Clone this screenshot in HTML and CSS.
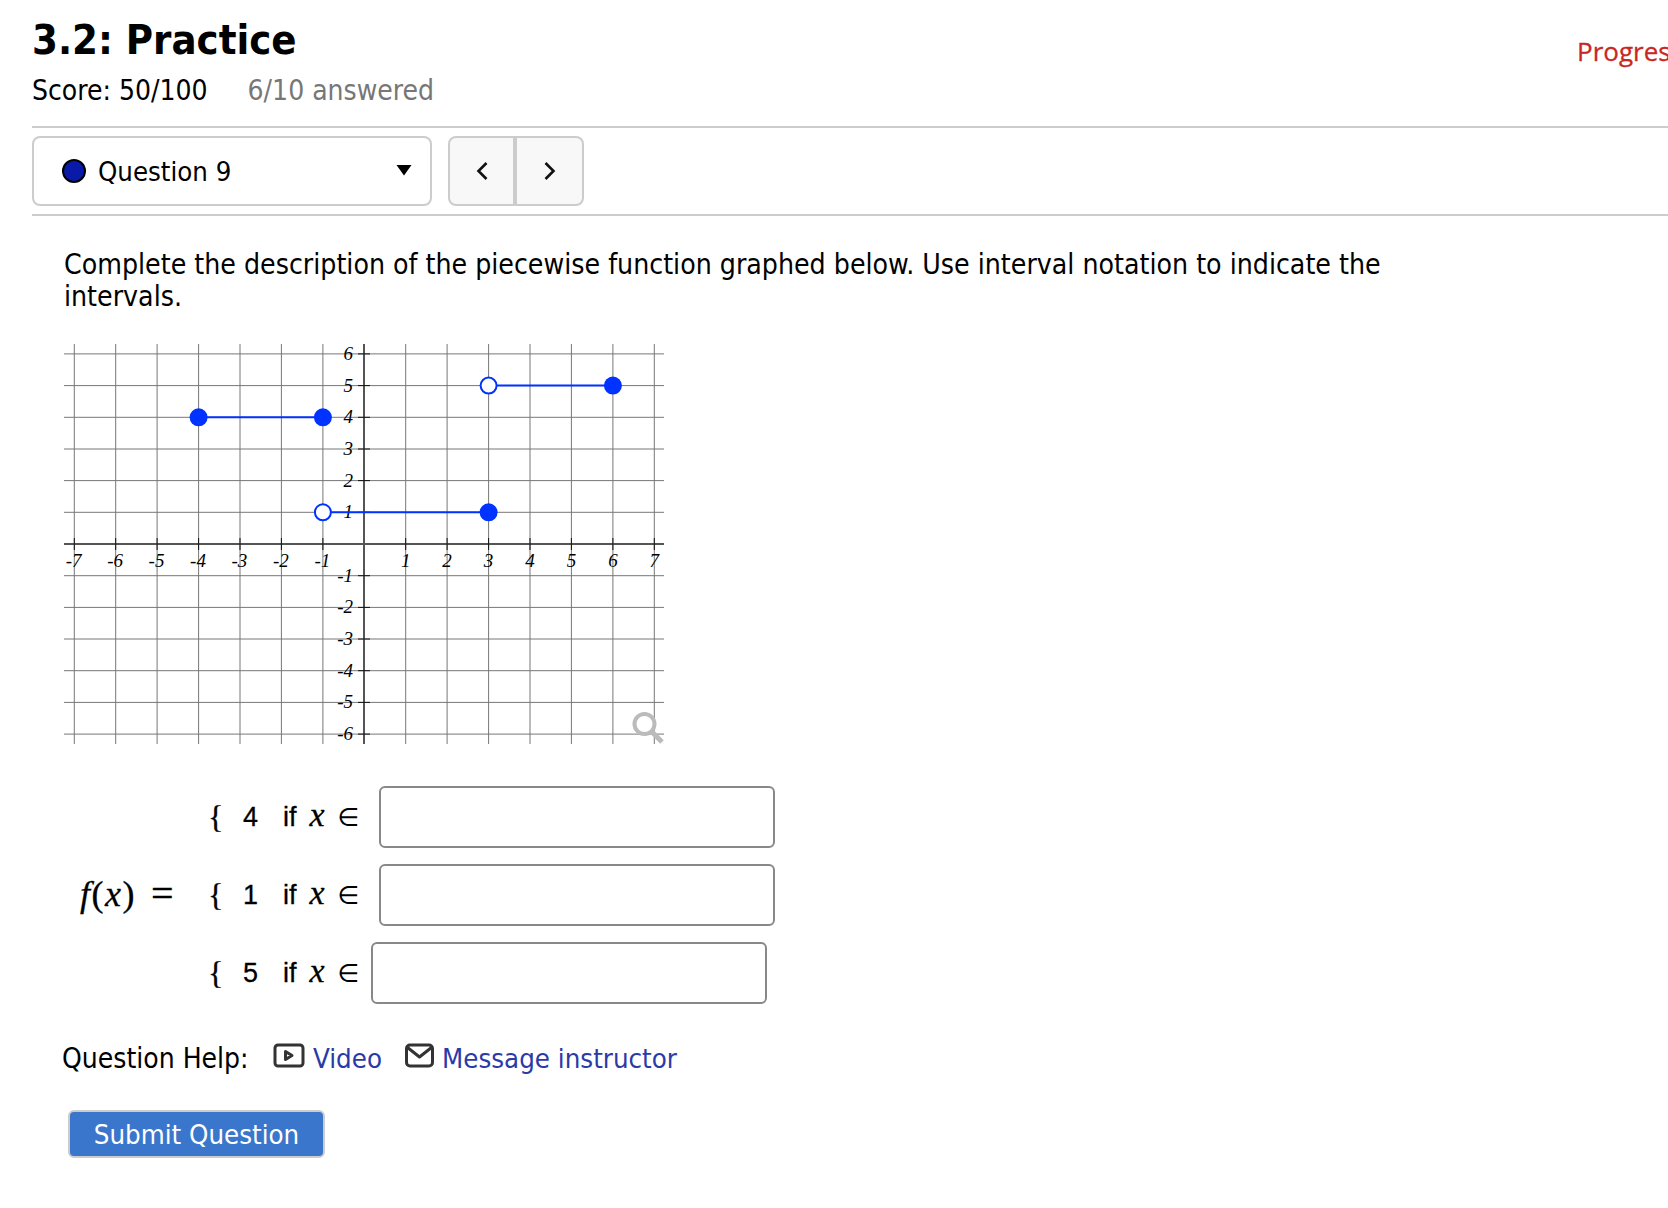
FILE: index.html
```html
<!DOCTYPE html>
<html lang="en">
<head>
<meta charset="utf-8">
<title>3.2: Practice</title>
<link rel="stylesheet" href="styles.css">
</head>
<body>
<header class="head">
  <div class="head-main">
    <h1 class="title">3.2: Practice</h1>
    <div class="score"><span>Score: 50/100</span><span class="answered">6/10 answered</span></div>
  </div>
  <a class="progress">Progress</a>
</header>
<nav class="nav">
  <div class="select">
    <span class="dot"></span><span class="select-label">Question 9</span><svg class="caret" width="16" height="12" viewBox="0 0 16 12"><path d="M.5 1h15L8 11.5z"/></svg>
  </div>
  <div class="pager">
    <button class="page-btn"><svg width="14" height="22" viewBox="0 0 14 22"><path d="M11.5 3 3.5 11l8 8" class="chev"/></svg></button>
    <button class="page-btn"><svg width="14" height="22" viewBox="0 0 14 22"><path d="M2.5 3l8 8-8 8" class="chev"/></svg></button>
  </div>
</nav>
<main class="question">
  <p class="prompt">Complete the description of the piecewise function graphed below. Use interval notation to indicate the intervals.</p>
  <svg class="graph" width="600" height="400" viewBox="0 0 600 400">
    <g class="grid">
      <path d="M10.3 0V400M51.7 0V400M93.1 0V400M134.6 0V400M176 0V400M217.4 0V400M258.9 0V400M341.7 0V400M383.1 0V400M424.6 0V400M466 0V400M507.4 0V400M548.9 0V400M590.3 0V400"/>
      <path d="M0 9.9H600M0 41.6H600M0 73.3H600M0 105H600M0 136.6H600M0 168.3H600M0 231.7H600M0 263.4H600M0 295H600M0 326.7H600M0 358.4H600M0 390.1H600"/>
    </g>
    <path class="axis" d="M0 200H600M300 0V400"/>
    <path class="ticks" d="M10.3 194V206M51.7 194V206M93.1 194V206M134.6 194V206M176 194V206M217.4 194V206M258.9 194V206M341.7 194V206M383.1 194V206M424.6 194V206M466 194V206M507.4 194V206M548.9 194V206M590.3 194V206M294 9.9H306M294 41.6H306M294 73.3H306M294 105H306M294 136.6H306M294 168.3H306M294 231.7H306M294 263.4H306M294 295H306M294 326.7H306M294 358.4H306M294 390.1H306"/>
    <g class="labels xl">
      <text x="9.7" y="223">-7</text><text x="51.1" y="223">-6</text><text x="92.5" y="223">-5</text><text x="134" y="223">-4</text><text x="175.4" y="223">-3</text><text x="216.8" y="223">-2</text><text x="258.3" y="223">-1</text><text x="341.7" y="223">1</text><text x="383.1" y="223">2</text><text x="424.6" y="223">3</text><text x="466" y="223">4</text><text x="507.4" y="223">5</text><text x="548.9" y="223">6</text><text x="590.3" y="223">7</text>
    </g>
    <g class="labels yl">
      <text x="289" y="16">6</text><text x="289" y="48">5</text><text x="289" y="79">4</text><text x="289" y="111">3</text><text x="289" y="143">2</text><text x="289" y="174">1</text><text x="289" y="238">-1</text><text x="289" y="269">-2</text><text x="289" y="301">-3</text><text x="289" y="333">-4</text><text x="289" y="364">-5</text><text x="289" y="396">-6</text>
    </g>
    <g class="plot">
      <path d="M134.6 73.3H258.9M258.9 168.3H424.6M424.6 41.6H548.9"/>
    </g>
    <circle class="pt" cx="134.6" cy="73.3" r="9"/><circle class="pt" cx="258.9" cy="73.3" r="9"/>
    <circle class="pt-open" cx="258.9" cy="168.3" r="8"/><circle class="pt" cx="424.6" cy="168.3" r="9"/>
    <circle class="pt-open" cx="424.6" cy="41.6" r="8"/><circle class="pt" cx="548.9" cy="41.6" r="9"/>
    <g class="zoom"><circle cx="580.5" cy="380" r="10"/><path d="M588 388 598 398"/></g>
  </svg>
  <div class="pieces">
    <div class="fx"><i>f</i>(<i>x</i>)<span class="eq">=</span></div>
    <div class="piece"><span class="brace">{</span><span class="val">4</span><span class="cond">if<i class="var">x</i><span class="in">∈</span></span><input class="answer" type="text" aria-label="Interval for 4"></div>
    <div class="piece"><span class="brace">{</span><span class="val">1</span><span class="cond">if<i class="var">x</i><span class="in">∈</span></span><input class="answer" type="text" aria-label="Interval for 1"></div>
    <div class="piece"><span class="brace">{</span><span class="val">5</span><span class="cond">if<i class="var">x</i><span class="in">∈</span></span><input class="answer answer-tight" type="text" aria-label="Interval for 5"></div>
  </div>
  <div class="help">
    <span class="help-label">Question Help:</span>
    <a class="help-link"><svg width="32" height="26" viewBox="0 0 32 26"><rect x="2" y="2" width="28" height="21" rx="3" class="ic"/><path d="M12.5 8.5v8l6.5-4z" class="ic"/></svg>Video</a>
    <a class="help-link help-mail"><svg width="30" height="26" viewBox="0 0 30 26"><rect x="1.5" y="2" width="26" height="21" rx="3.5" class="ic"/><path d="M2.5 4.5 14.5 14l12-9.5" class="ic"/></svg>Message instructor</a>
  </div>
  <button class="submit">Submit Question</button>
</main>
</body>
</html>
```
FILE: styles.css
```css
html, body { margin: 0; height: 1208px; overflow: hidden; background: #fff; }
body { font-family: "DejaVu Sans Condensed", "DejaVu Sans", sans-serif; font-size: 28px; color: #000; padding: 0 0 0 32px; box-sizing: border-box; width: 1668px; }
.head { display: flex; height: 126px; }
.head-main { width: 1545px; flex: none; }
.title { margin: 0; padding-top: 14px; font-size: 41.4px; line-height: 52px; font-weight: 700; }
.score { display: flex; gap: 40px; margin-top: 9px; line-height: 32px; }
.answered { color: #777; }
.progress { flex: none; margin-top: 33px; font-family: "Open Sans", sans-serif; font-size: 26px; font-weight: 400; -webkit-text-stroke: 0.3px #c8281e; line-height: 36px; color: #c8281e; white-space: nowrap; }
.nav { display: flex; gap: 16px; border-top: 2px solid #ccc; border-bottom: 2px solid #ccc; padding: 8px 0; height: 70px; }
.select { box-sizing: border-box; width: 400px; height: 70px; border: 2px solid #ccc; border-radius: 8px; display: flex; align-items: center; padding: 0 18px 0 28px; font-size: 27.3px; }
.dot { width: 20px; height: 20px; border: 2px solid #000; border-radius: 50%; background: #0a1aa8; flex: none; }
.select-label { margin-left: 12px; flex: 1; }
.caret { flex: none; margin-bottom: 2px; }
.pager { display: flex; height: 70px; box-sizing: border-box; border: 2px solid #ccc; border-radius: 8px; background: #f8f8f8; }
.page-btn { width: 65px; padding: 0; border: 0; background: none; display: flex; align-items: center; justify-content: center; }
.page-btn:first-child { width: 67px; border-right: 4px solid #ccc; }
.chev { fill: none; stroke: #111; stroke-width: 2.6; }
.question { padding-left: 32px; }
.prompt { margin: 0; padding-top: 33px; width: 1340px; line-height: 32px; font-size: 28.2px; }
.graph { display: block; margin-top: 31px; }
.grid path { fill: none; stroke: #777; stroke-width: 1; }
.axis { fill: none; stroke: #555; stroke-width: 2; }
.ticks { fill: none; stroke: #111; stroke-width: 1; }
.labels text { font-family: "Liberation Serif", serif; font-style: italic; font-size: 19px; fill: #000; }
.xl text { text-anchor: middle; }
.yl text { text-anchor: end; }
.plot path { fill: none; stroke: #0033ff; stroke-width: 2; }
.pt { fill: #0033ff; }
.pt-open { fill: #fff; stroke: #0033ff; stroke-width: 2; }
.zoom circle { fill: none; stroke: #bbb; stroke-width: 4; }
.zoom path { fill: none; stroke: #bbb; stroke-width: 5; }
.pieces { display: grid; grid-template-columns: 144px auto; grid-auto-rows: 62px; row-gap: 16px; margin-top: 42px; align-items: center; font-family: "Liberation Sans", sans-serif; font-size: 27px; -webkit-text-stroke: 0.3px #000; }
.fx { grid-row: 1 / 4; font-family: "Liberation Serif", serif; font-size: 36px; letter-spacing: 1.5px; padding: 0 0 3px 16px; display: flex; align-items: center; white-space: pre; }
.eq { margin-left: 15px; font-size: 40px; line-height: 1; }
.piece { grid-column: 2; display: flex; align-items: center; height: 62px; }
.brace { width: 35px; font-family: "Liberation Serif", serif; font-size: 32px; }
.val { width: 40px; }
.cond { width: 96px; display: flex; align-items: center; }
.var { font-family: "Liberation Serif", serif; font-size: 34px; line-height: 1; margin: -4px 0 0 13px; }
.in { margin-left: 13px; font-size: 25px; font-family: "DejaVu Sans", sans-serif; -webkit-text-stroke: 0; }
.answer { box-sizing: border-box; width: 396px; height: 62px; border: 2px solid #888; border-radius: 6px; background: #fff; padding: 0; }
.answer-tight { margin-left: -8px; }
.help { display: flex; align-items: center; margin-top: 34px; margin-left: -2px; height: 40px; }
.help-label { width: 211px; }
.help-link { display: flex; align-items: center; gap: 8px; color: #2b3aa8; margin-right: 23px; font-size: 27.4px; }
.help-mail { gap: 7px; }
.help-link svg { margin-top: -4px; }
.ic { fill: none; stroke: #333; stroke-width: 3; stroke-linejoin: round; }
.submit { display: block; box-sizing: border-box; width: 257px; height: 48px; margin: 32px 0 0 4px; border: 2px solid #ccc; border-radius: 6px; background: #3a76cc; color: #fff; font: inherit; font-size: 27.4px; padding: 0; }
```
